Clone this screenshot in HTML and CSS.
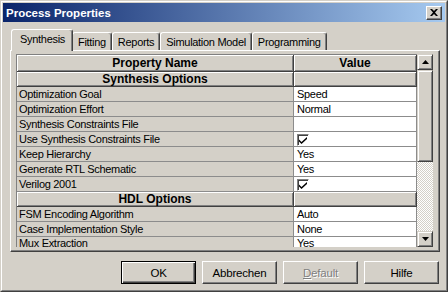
FILE: index.html
```html
<!DOCTYPE html>
<html lang="en">
<head>
    <meta charset="UTF-8">
    <title>Process Properties</title>
    <link rel="stylesheet" href="styles.css">
</head>
<body>
    <div class="window">
        <div class="frame">
            <div class="titlebar">
                <span class="title">Process Properties</span>
                <span class="close-btn">
                    <svg width="8" height="7" viewBox="0 0 8 7"><path d="M0 0h2l2 2 2-2h2L5 3.5 8 7H6L4 5 2 7H0l3-3.5z" fill="#000"/></svg>
                </span>
            </div>
            <div class="content">
                <div class="tabs">
                    <div class="tab active">Synthesis</div>
                    <div class="tab">Fitting</div>
                    <div class="tab">Reports</div>
                    <div class="tab">Simulation Model</div>
                    <div class="tab">Programming</div>
                </div>
                <div class="panel">
                    <div class="grid">
                        <div class="table-wrap">
                            <table class="props">
                                <colgroup><col class="col-name"><col class="col-value"></colgroup>
                                <tr class="head"><td>Property Name</td><td>Value</td></tr>
                                <tr class="section"><td>Synthesis Options</td><td></td></tr>
                                <tr><td>Optimization Goal</td><td>Speed</td></tr>
                                <tr><td>Optimization Effort</td><td>Normal</td></tr>
                                <tr><td>Synthesis Constraints File</td><td></td></tr>
                                <tr><td>Use Synthesis Constraints File</td><td><span class="check"><svg width="8" height="7" viewBox="0 0 8 7"><path d="M0 2.5l2.5 2.5L8 0v2L2.5 7 0 4.5z" fill="#000"/></svg></span></td></tr>
                                <tr><td>Keep Hierarchy</td><td>Yes</td></tr>
                                <tr><td>Generate RTL Schematic</td><td>Yes</td></tr>
                                <tr><td>Verilog 2001</td><td><span class="check"><svg width="8" height="7" viewBox="0 0 8 7"><path d="M0 2.5l2.5 2.5L8 0v2L2.5 7 0 4.5z" fill="#000"/></svg></span></td></tr>
                                <tr class="section"><td>HDL Options</td><td></td></tr>
                                <tr><td>FSM Encoding Algorithm</td><td>Auto</td></tr>
                                <tr><td>Case Implementation Style</td><td>None</td></tr>
                                <tr class="last"><td>Mux Extraction</td><td>Yes</td></tr>
                            </table>
                        </div>
                        <div class="scrollbar">
                            <div class="sb-btn"><svg width="7" height="4" viewBox="0 0 7 4"><path d="M3.5 0L7 4H0z" fill="#000"/></svg></div>
                            <div class="sb-thumb"></div>
                            <div class="sb-track"></div>
                            <div class="sb-btn"><svg width="7" height="4" viewBox="0 0 7 4"><path d="M0 0h7L3.5 4z" fill="#000"/></svg></div>
                        </div>
                    </div>
                </div>
                <div class="buttons">
                    <button class="btn default">OK</button>
                    <button class="btn">Abbrechen</button>
                    <button class="btn disabled"><u>D</u>efault</button>
                    <button class="btn">Hilfe</button>
                </div>
            </div>
        </div>
    </div>
</body>
</html>
```

FILE: styles.css
```css
body {
    margin: 0;
    background-color: #d4d0c8;
    font-family: "Liberation Sans", Arial, sans-serif;
    font-size: 11px;
    letter-spacing: -0.3px;
    color: #000;
}
.window {
    width: 448px;
    height: 292px;
    box-sizing: border-box;
    border: 1px solid;
    border-color: #d4d0c8 #404040 #404040 #d4d0c8;
    background-color: #d4d0c8;
}
.frame {
    height: 100%;
    box-sizing: border-box;
    border: 1px solid;
    border-color: #fff #808080 #808080 #fff;
    padding: 1px;
    display: flex;
    flex-direction: column;
}
.titlebar {
    height: 19px;
    flex: 0 0 19px;
    background: linear-gradient(to right, #0a246a, #a6caf0);
    display: flex;
    align-items: center;
    justify-content: space-between;
    padding: 0 3px 0 3px;
    color: #fff;
    font-weight: bold;
    font-size: 11.5px;
    letter-spacing: 0;
}
.close-btn {
    width: 14px;
    height: 12px;
    background-color: #d4d0c8;
    border: 1px solid;
    border-color: #fff #404040 #404040 #fff;
    box-shadow: inset -1px -1px #808080;
    display: flex;
    align-items: center;
    justify-content: center;
}
.content {
    flex: 1;
    padding: 7px 5px 0 7px;
    display: flex;
    flex-direction: column;
}
.tabs {
    display: flex;
    align-items: flex-end;
    height: 21px;
    padding-left: 3px;
}
.tab {
    height: 17px;
    padding: 0 5px;
    line-height: 19px;
    border: 1px solid;
    border-color: #fff #404040 transparent #fff;
    border-bottom: none;
    border-radius: 3px 3px 0 0;
    box-shadow: inset -1px 0 #808080;
    white-space: nowrap;
}
.tab.active {
    height: 21px;
    margin: 0 -1px -1px -2px;
    padding: 0 7px 0 8px;
    line-height: 18px;
    background-color: #d4d0c8;
    position: relative;
    z-index: 1;
}
.tab.active + .tab {
    border-left-color: #fff;
}
.panel {
    height: 202px;
    box-sizing: border-box;
    border: 1px solid;
    border-color: #fff #404040 #404040 #fff;
    box-shadow: inset -1px -1px #808080;
    padding: 3px 6px 4px 5px;
}
.grid {
    display: flex;
    height: 193px;
}
.table-wrap {
    width: 400px;
    overflow: hidden;
    border-top: 1px solid #808080;
    border-left: 1px solid #808080;
}
.props {
    width: 400px;
    table-layout: fixed;
    border-collapse: separate;
    border-spacing: 0;
}
.col-name {
    width: 277px;
}
.col-value {
    width: 123px;
}
.props td {
    height: 14px;
    padding: 0 0 0 2px;
    line-height: 14px;
    border-right: 1px solid #8c8c8c;
    border-bottom: 1px solid #8c8c8c;
    background-color: #d4d0c8;
    white-space: nowrap;
    overflow: hidden;
    vertical-align: middle;
}
.props td + td {
    background-color: #fff;
    padding-left: 3px;
}
.props .last td {
    height: 10px;
    line-height: 12px;
    vertical-align: top;
}
.props .head td,
.props .section td {
    background-color: #d4d0c8;
    text-align: center;
    font-weight: bold;
    font-size: 12px;
    letter-spacing: 0;
    padding: 0;
    border-right-color: #404040;
    border-bottom-color: #404040;
    box-shadow: inset 1px 1px #fff, inset -1px -1px #808080;
}
.props .head td {
    height: 16px;
    line-height: 16px;
}
.check {
    display: inline-flex;
    align-items: center;
    justify-content: center;
    width: 10px;
    height: 10px;
    margin-top: 2px;
    border: 1px solid;
    border-color: #808080 #fff #fff #808080;
    box-shadow: inset 1px 1px #404040;
    background-color: #fff;
    vertical-align: top;
}
.scrollbar {
    width: 16px;
    display: flex;
    flex-direction: column;
}
.sb-btn,
.sb-thumb {
    box-sizing: border-box;
    background-color: #d4d0c8;
    border: 1px solid;
    border-color: #d4d0c8 #404040 #404040 #d4d0c8;
    box-shadow: inset 1px 1px #fff, inset -1px -1px #808080;
}
.sb-btn {
    height: 16px;
    display: flex;
    align-items: center;
    justify-content: center;
}
.sb-thumb {
    height: 92px;
}
.sb-track {
    flex: 1;
    background: repeating-conic-gradient(#d4d0c8 0 25%, #fff 0 50%) 0 0 / 2px 2px;
}
.buttons {
    display: flex;
    justify-content: flex-end;
    gap: 6px;
    margin-top: 9px;
    padding-right: 1px;
}
.btn {
    width: 75px;
    height: 23px;
    padding: 0;
    font-family: "Liberation Sans", Arial, sans-serif;
    font-size: 11.5px;
    letter-spacing: -0.2px;
    color: #000;
    background-color: #d4d0c8;
    border: 1px solid;
    border-color: #fff #404040 #404040 #fff;
    box-shadow: inset -1px -1px #808080;
}
.btn.default {
    border-color: #000;
    box-shadow: inset 1px 1px #fff, inset -1px -1px #404040, inset -2px -2px #808080;
}
.btn.disabled {
    color: #808080;
    text-shadow: 1px 1px #fff;
}
```
